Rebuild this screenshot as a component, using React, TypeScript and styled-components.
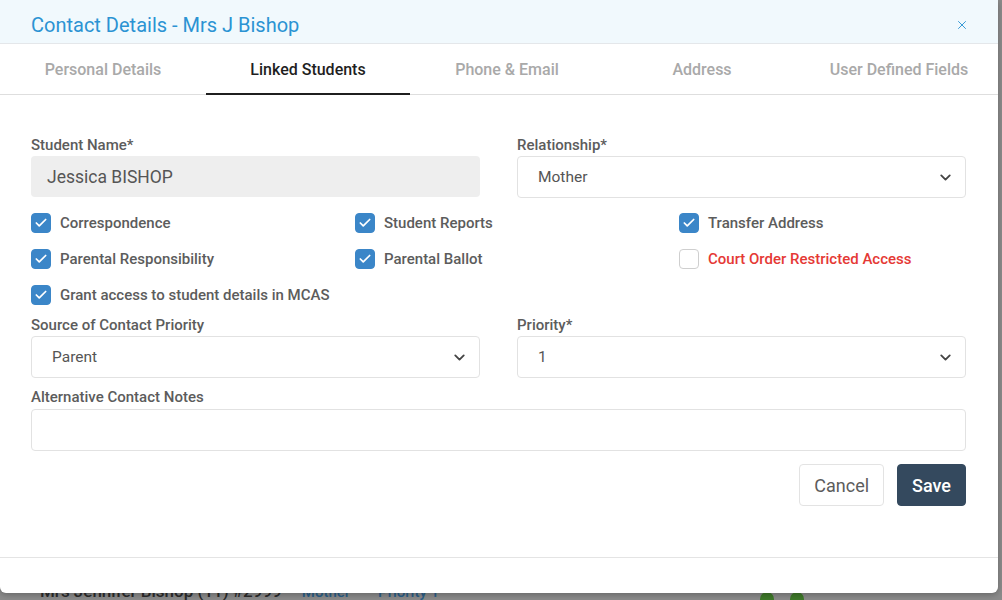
import React, { useState } from "react";
import styled, { createGlobalStyle } from "styled-components";
import { Check, ChevronDown, X } from "lucide-react";

const GlobalStyle = createGlobalStyle`
  html, body {
    margin: 0;
    padding: 0;
    font-family: Roboto, "Liberation Sans", Arial, sans-serif;
    background: #8a8a8a;
  }
  * { box-sizing: border-box; }
`;

const Page = styled.div`
  position: relative;
  width: 1002px;
  height: 600px;
  overflow: hidden;
  background: #8b8b8b;
`;

const BehindRow = styled.div`
  position: absolute;
  left: 40px;
  top: 581px;
  display: flex;
  align-items: baseline;
  gap: 20px;
  font-size: 17px;
  color: #2c2c2c;
  font-weight: 500;
`;

const BehindLink = styled.span<{ $gap?: number }>`
  color: #2a5f8a;
  font-size: 15px;
  font-weight: 500;
  margin-left: ${(p) => p.$gap ?? 0}px;
`;

const BehindIcons = styled.div`
  position: absolute;
  left: 760px;
  top: 592px;
  display: flex;
  gap: 16px;
`;

const Dot = styled.span`
  width: 14px;
  height: 14px;
  border-radius: 50%;
  background: #3f7a2a;
`;

const Modal = styled.div`
  position: absolute;
  left: 0;
  top: 0;
  width: 998px;
  height: 593px;
  background: #fff;
  border-radius: 0 0 6px 6px;
  display: flex;
  flex-direction: column;
  box-shadow: 0 2px 6px rgba(0, 0, 0, 0.25);
`;

const Header = styled.div`
  height: 44px;
  background: #f1f9fd;
  border-bottom: 1px solid #e4e7ea;
  display: flex;
  align-items: center;
  justify-content: space-between;
  padding: 7px 29px 0 31px;
`;

const Title = styled.h4`
  margin: 0;
  font-size: 20px;
  font-weight: 400;
  color: #2b93d3;
`;

const CloseBtn = styled.button`
  border: none;
  background: none;
  padding: 0;
  display: flex;
  color: #2b93d3;
  cursor: pointer;
`;

const Tabs = styled.div`
  display: grid;
  grid-template-columns: 206px 204px 194px 196px 198px;
  height: 51px;
  border-bottom: 1px solid #dedede;
`;

const Tab = styled.button<{ $active?: boolean }>`
  border: none;
  background: none;
  font-family: inherit;
  font-size: 16px;
  font-weight: 500;
  color: ${(p) => (p.$active ? "#1f1f1f" : "#a9a9a9")};
  border-bottom: 2px solid ${(p) => (p.$active ? "#1f1f1f" : "transparent")};
  margin-bottom: -1px;
  padding: 1px 0 0;
  cursor: pointer;
`;

const Body = styled.div`
  padding: 41px 32px 0 31px;
  flex: 1;
`;

const Row = styled.div`
  display: grid;
  grid-template-columns: 449px 449px;
  column-gap: 37px;
`;

const Field = styled.div`
  display: flex;
  flex-direction: column;
`;

const Label = styled.label`
  font-size: 15px;
  line-height: 18px;
  font-weight: 500;
  color: #5c5c5c;
  margin-bottom: 2px;
`;

const ReadOnly = styled.div`
  height: 41px;
  background: #eeeeee;
  border-radius: 4px;
  padding: 0 16px;
  display: flex;
  align-items: center;
  font-size: 17.5px;
  color: #555;
`;

const SelectBox = styled.div`
  height: 42px;
  border: 1px solid #e2e2e2;
  border-radius: 4px;
  padding: 0 11px 0 20px;
  display: flex;
  align-items: center;
  justify-content: space-between;
  font-size: 15.5px;
  color: #555;
  background: #fff;
`;

const Checks = styled.div`
  display: grid;
  grid-template-columns: 324px 324px auto;
  row-gap: 16px;
  margin: 15px 0 11px;
`;

const CheckItem = styled.label<{ $danger?: boolean }>`
  display: flex;
  align-items: center;
  gap: 9px;
  font-size: 15px;
  font-weight: 500;
  color: ${(p) => (p.$danger ? "#e53935" : "#5c5c5c")};
  height: 20px;
  cursor: pointer;
`;

const Box = styled.span<{ $on: boolean }>`
  width: 20px;
  height: 20px;
  border-radius: 4px;
  flex-shrink: 0;
  display: flex;
  align-items: center;
  justify-content: center;
  background: ${(p) => (p.$on ? "#3b86c8" : "#fff")};
  border: 1px solid ${(p) => (p.$on ? "#3b86c8" : "#cfcfcf")};
`;

const Notes = styled.div`
  margin-top: 10px;
  display: flex;
  flex-direction: column;
`;

const TextArea = styled.div`
  height: 42px;
  margin-top: 1px;
  border: 1px solid #e2e2e2;
  border-radius: 4px;
`;

const Actions = styled.div`
  display: flex;
  justify-content: flex-end;
  gap: 13px;
  margin-top: 13px;
`;

const Button = styled.button<{ $primary?: boolean }>`
  height: 42px;
  padding: 0 14px;
  border-radius: 4px;
  font-family: inherit;
  font-size: 18px;
  font-weight: ${(p) => (p.$primary ? 500 : 400)};
  border: 1px solid ${(p) => (p.$primary ? "#34495e" : "#e3e3e3")};
  background: ${(p) => (p.$primary ? "#34495e" : "#fff")};
  color: ${(p) => (p.$primary ? "#fff" : "#5c5c5c")};
  cursor: pointer;
`;

const Footer = styled.div`
  height: 36px;
  border-top: 1px solid #e4e4e4;
`;

const tabs = [
  "Personal Details",
  "Linked Students",
  "Phone & Email",
  "Address",
  "User Defined Fields",
];

const initialChecks = [
  { label: "Correspondence", on: true },
  { label: "Student Reports", on: true },
  { label: "Transfer Address", on: true },
  { label: "Parental Responsibility", on: true },
  { label: "Parental Ballot", on: true },
  { label: "Court Order Restricted Access", on: false, danger: true },
  { label: "Grant access to student details in MCAS", on: true },
];

function Select({ value }: { value: string }) {
  return (
    <SelectBox>
      <span>{value}</span>
      <ChevronDown size={17} strokeWidth={2.6} color="#444" />
    </SelectBox>
  );
}

export default function App() {
  const [active, setActive] = useState(1);
  const [checks, setChecks] = useState(initialChecks);

  const toggle = (i: number) =>
    setChecks((prev) => prev.map((c, j) => (j === i ? { ...c, on: !c.on } : c)));

  return (
    <Page>
      <GlobalStyle />
      <BehindRow>
        <span>Mrs Jennifer Bishop (11) #2999</span>
        <BehindLink>Mother</BehindLink>
        <BehindLink $gap={8}>Priority 1</BehindLink>
      </BehindRow>
      <BehindIcons>
        <Dot />
        <Dot />
      </BehindIcons>
      <Modal>
        <Header>
          <Title>Contact Details - Mrs J Bishop</Title>
          <CloseBtn aria-label="Close">
            <X size={14} strokeWidth={1.6} />
          </CloseBtn>
        </Header>
        <Tabs>
          {tabs.map((t, i) => (
            <Tab key={t} $active={i === active} onClick={() => setActive(i)}>
              {t}
            </Tab>
          ))}
        </Tabs>
        <Body>
          <Row>
            <Field>
              <Label>Student Name*</Label>
              <ReadOnly>Jessica BISHOP</ReadOnly>
            </Field>
            <Field>
              <Label>Relationship*</Label>
              <Select value="Mother" />
            </Field>
          </Row>
          <Checks>
            {checks.map((c, i) => (
              <CheckItem key={c.label} $danger={c.danger} onClick={() => toggle(i)}>
                <Box $on={c.on}>{c.on && <Check size={14} strokeWidth={3} color="#fff" />}</Box>
                {c.label}
              </CheckItem>
            ))}
          </Checks>
          <Row>
            <Field>
              <Label>Source of Contact Priority</Label>
              <Select value="Parent" />
            </Field>
            <Field>
              <Label>Priority*</Label>
              <Select value="1" />
            </Field>
          </Row>
          <Notes>
            <Label>Alternative Contact Notes</Label>
            <TextArea />
          </Notes>
          <Actions>
            <Button>Cancel</Button>
            <Button $primary>Save</Button>
          </Actions>
        </Body>
        <Footer />
      </Modal>
    </Page>
  );
}
